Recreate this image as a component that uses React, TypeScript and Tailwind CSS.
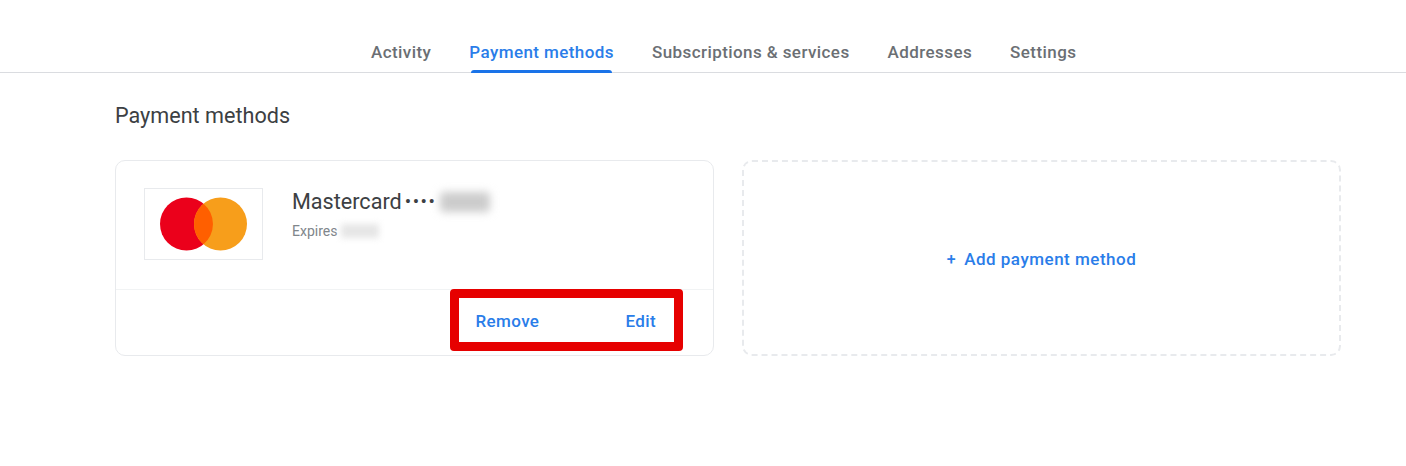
const tabs = ["Activity", "Payment methods", "Subscriptions & services", "Addresses", "Settings"];

function MastercardLogo() {
  return (
    <svg width="88" height="54" viewBox="0 0 88 54" aria-label="Mastercard">
      <circle cx="26.5" cy="27" r="26.5" fill="#eb001b" />
      <circle cx="60.5" cy="27" r="26.5" fill="#f79e1b" />
      <path d="M43.5 6.7a26.5 26.5 0 0 1 0 40.6a26.5 26.5 0 0 1 0-40.6z" fill="#ff5f00" />
    </svg>
  );
}

export default function App() {
  return (
    <div className="h-[466px] w-[1406px] overflow-hidden bg-white font-['Roboto',sans-serif]">
      <nav className="flex h-[73px] items-end gap-[38px] border-b border-[#dadce0] pl-[371px]">
        {tabs.map((tab) => {
          const active = tab === "Payment methods";
          return (
            <a
              key={tab}
              className={
                active
                  ? "relative h-[32px] text-[17px] font-medium tracking-[0.42px] text-[#2a7de9]"
                  : "h-[32px] text-[17px] font-medium tracking-[0.42px] text-[#6b6f74]"
              }
            >
              {tab}
              {active && (
                <span className="absolute bottom-[-1px] left-[2px] right-[2px] h-[3px] rounded-t-[3px] bg-[#1a73e8]" />
              )}
            </a>
          );
        })}
      </nav>

      <main className="pl-[115px]">
        <h1 className="mt-[29px] text-[21.6px] leading-[28px] text-[#3c4043]">Payment methods</h1>

        <div className="mt-[30px] flex gap-[28px]">
          <section className="relative h-[196px] w-[599px] shrink-0 rounded-[10px] border border-[#e8eaed]">
            <div className="flex h-[128px] gap-[29px] pl-[28px] pt-[27px]">
              <div className="flex h-[72px] w-[119px] items-center justify-center border border-[#e8eaed]">
                <MastercardLogo />
              </div>
              <div className="pt-[1px]">
                <div className="flex items-center text-[21.6px] leading-[26px] text-[#3c4043]">
                  Mastercard
                  <span className="ml-[3px] text-[19px] tracking-[1.5px]">••••</span>
                  <span className="ml-[4px] h-[20px] w-[50px] rounded-sm bg-[#cccccc] blur-[4px]" />
                </div>
                <div className="mt-[6px] flex items-center text-[14px] leading-[20px] text-[#80868b]">
                  Expires
                  <span className="ml-[4px] h-[14px] w-[38px] bg-[#e6e6e6] blur-[3px]" />
                </div>
              </div>
            </div>
            <div className="flex h-[66px] items-center justify-end border-t border-[#f1f3f4] pb-[1px] pr-[57px] text-[17px] font-medium tracking-[0.4px] text-[#2a7de9]">
              <button>Remove</button>
              <button className="ml-[86px]">Edit</button>
            </div>
            <div className="absolute left-[334px] top-[128px] h-[62px] w-[233px] rounded-[4px] border-[9px] border-[#e60000]" />
          </section>

          <section className="flex h-[196px] w-[599px] shrink-0 items-center justify-center rounded-[10px] border-2 border-dashed border-[#e8eaed] pt-[4px] text-[17px] font-medium tracking-[0.5px] text-[#2a7de9]">
            <span className="mr-[8px] text-[16px]">+</span>
            Add payment method
          </section>
        </div>
      </main>
    </div>
  );
}
